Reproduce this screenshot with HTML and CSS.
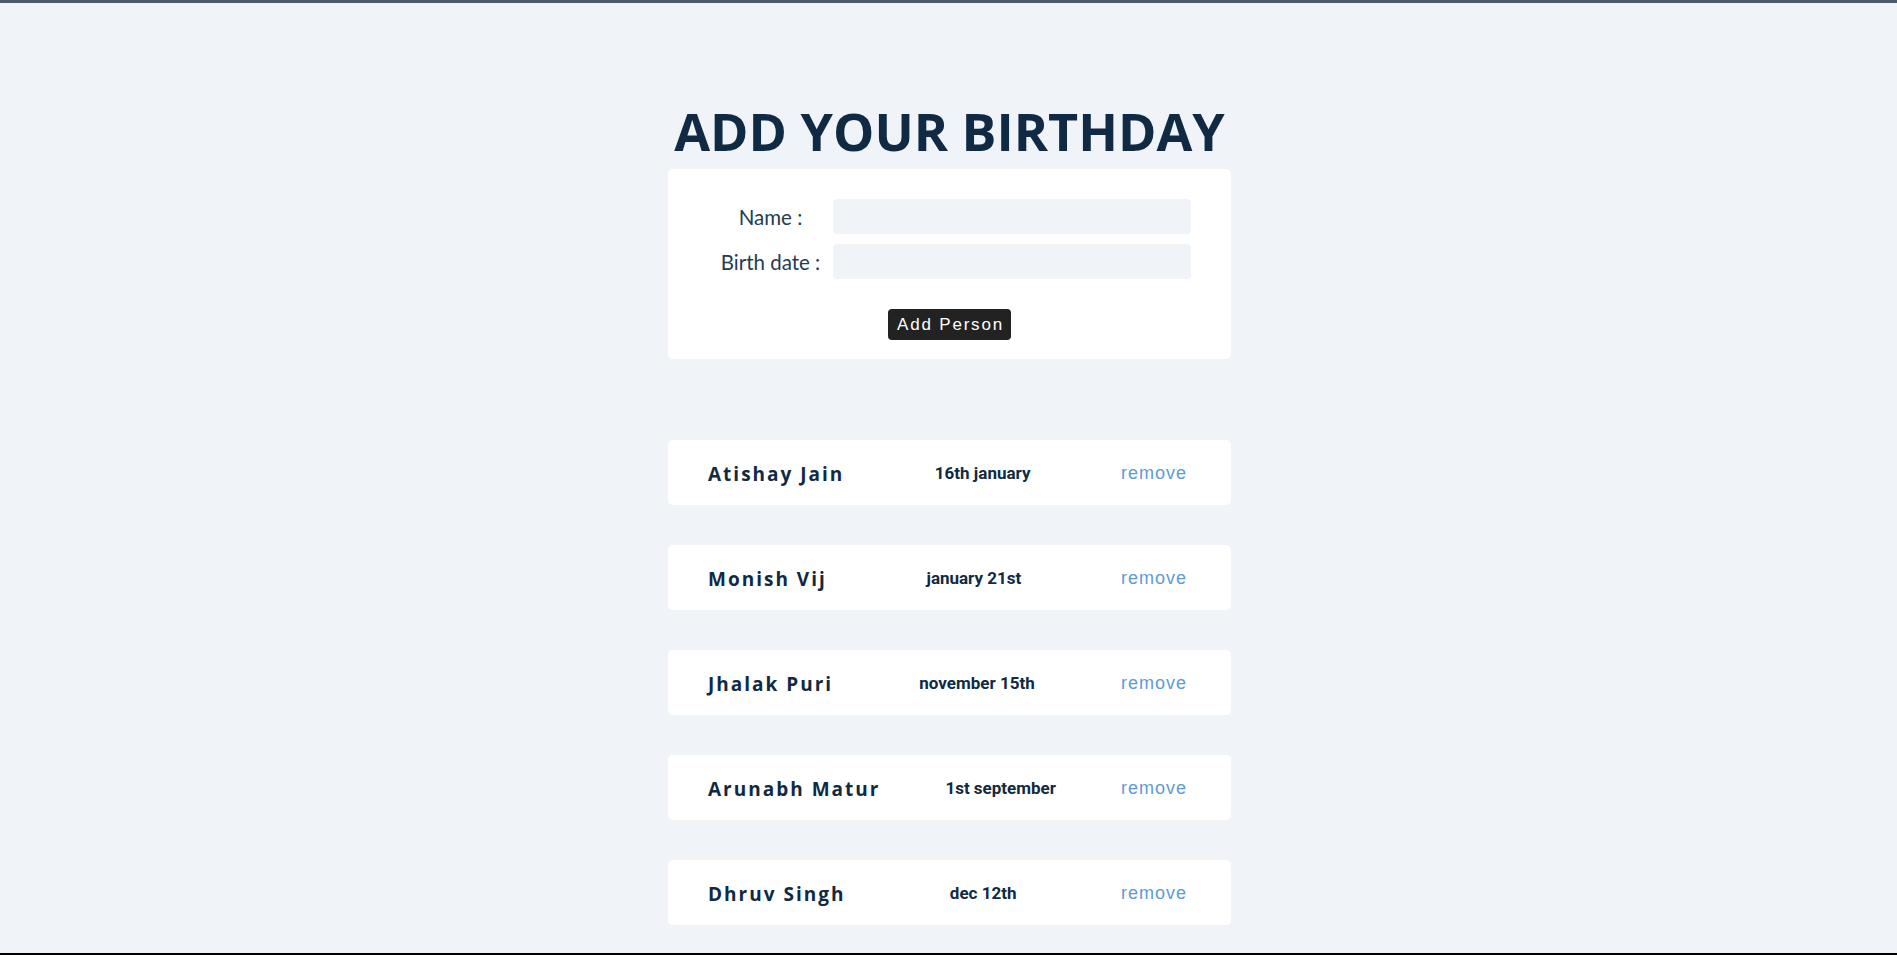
FILE: index.html
```html
<!DOCTYPE html>
<html lang="en">
<head>
<meta charset="utf-8">
<title>Add your birthday</title>
<link rel="stylesheet" href="styles.css">
</head>
<body>
<main class="page">
  <h1 class="title">ADD YOUR BIRTHDAY</h1>
  <form class="card form">
    <label class="label" for="name">Name :</label>
    <input class="field" id="name" type="text">
    <label class="label" for="date">Birth date :</label>
    <input class="field" id="date" type="text">
    <div class="actions"><button type="button" class="btn">Add Person</button></div>
  </form>
  <ul class="list">
    <li class="card row"><span class="name">Atishay Jain</span><span class="date">16th january</span><span class="remove">remove</span></li>
    <li class="card row"><span class="name">Monish Vij</span><span class="date">january 21st</span><span class="remove">remove</span></li>
    <li class="card row"><span class="name">Jhalak Puri</span><span class="date">november 15th</span><span class="remove">remove</span></li>
    <li class="card row"><span class="name">Arunabh Matur</span><span class="date">1st september</span><span class="remove">remove</span></li>
    <li class="card row"><span class="name">Dhruv Singh</span><span class="date">dec 12th</span><span class="remove">remove</span></li>
  </ul>
</main>
</body>
</html>
```
FILE: styles.css
```css
html {
  height: 100%;
  box-sizing: border-box;
  border-bottom: 2px solid #000;
}
body {
  margin: 0;
  padding-left: 2px;
  background: #f0f4f8;
  border-top: 3px solid #4a5a67;
  font-family: "Open Sans", sans-serif;
}
.page {
  width: 563px;
  margin: 0 auto;
  padding-top: 102px;
}
.title {
  margin: 0 0 12px;
  font-family: "Open Sans", sans-serif;
  font-weight: 700;
  font-size: 52px;
  line-height: 1;
  letter-spacing: 0;
  color: #102a43;
  text-align: center;
  white-space: nowrap;
}
.card {
  background: #fff;
  border-radius: 5px;
}
.form {
  display: grid;
  grid-template-columns: 125px 1fr;
  row-gap: 10px;
  align-items: center;
  padding: 30px 40px 19px;
}
.label {
  font-family: Lato, sans-serif;
  font-size: 20.5px;
  color: #243b53;
  text-align: center;
}
.field {
  height: 35px;
  box-sizing: border-box;
  border: none;
  border-radius: 4px;
  background: #f0f4f8;
  margin: 0;
}
.actions {
  grid-column: 1 / -1;
  display: flex;
  justify-content: center;
  margin-top: 20px;
}
.btn {
  height: 31px;
  padding: 0 7px 0 9px;
  border: none;
  border-radius: 4px;
  background: #222;
  color: #fff;
  font-family: "Liberation Sans", Arial, sans-serif;
  font-size: 17px;
  letter-spacing: 1.8px;
}
.list {
  list-style: none;
  margin: 81px 0 0;
  padding: 0;
  display: flex;
  flex-direction: column;
  gap: 40px;
}
.row {
  height: 65px;
  box-sizing: border-box;
  display: flex;
  align-items: center;
  justify-content: space-between;
  padding: 0 44px 0 40px;
}
.name {
  font-family: "Open Sans", sans-serif;
  font-weight: 700;
  font-size: 19px;
  letter-spacing: 2px;
  color: #102a43;
  margin-top: 2px;
}
.date {
  font-family: Roboto, sans-serif;
  font-weight: 700;
  font-size: 17px;
  color: #102a43;
}
.remove {
  font-family: "Liberation Sans", Arial, sans-serif;
  font-size: 18px;
  letter-spacing: 1px;
  color: #5e9bd6;
  margin-top: 1px;
}
```
